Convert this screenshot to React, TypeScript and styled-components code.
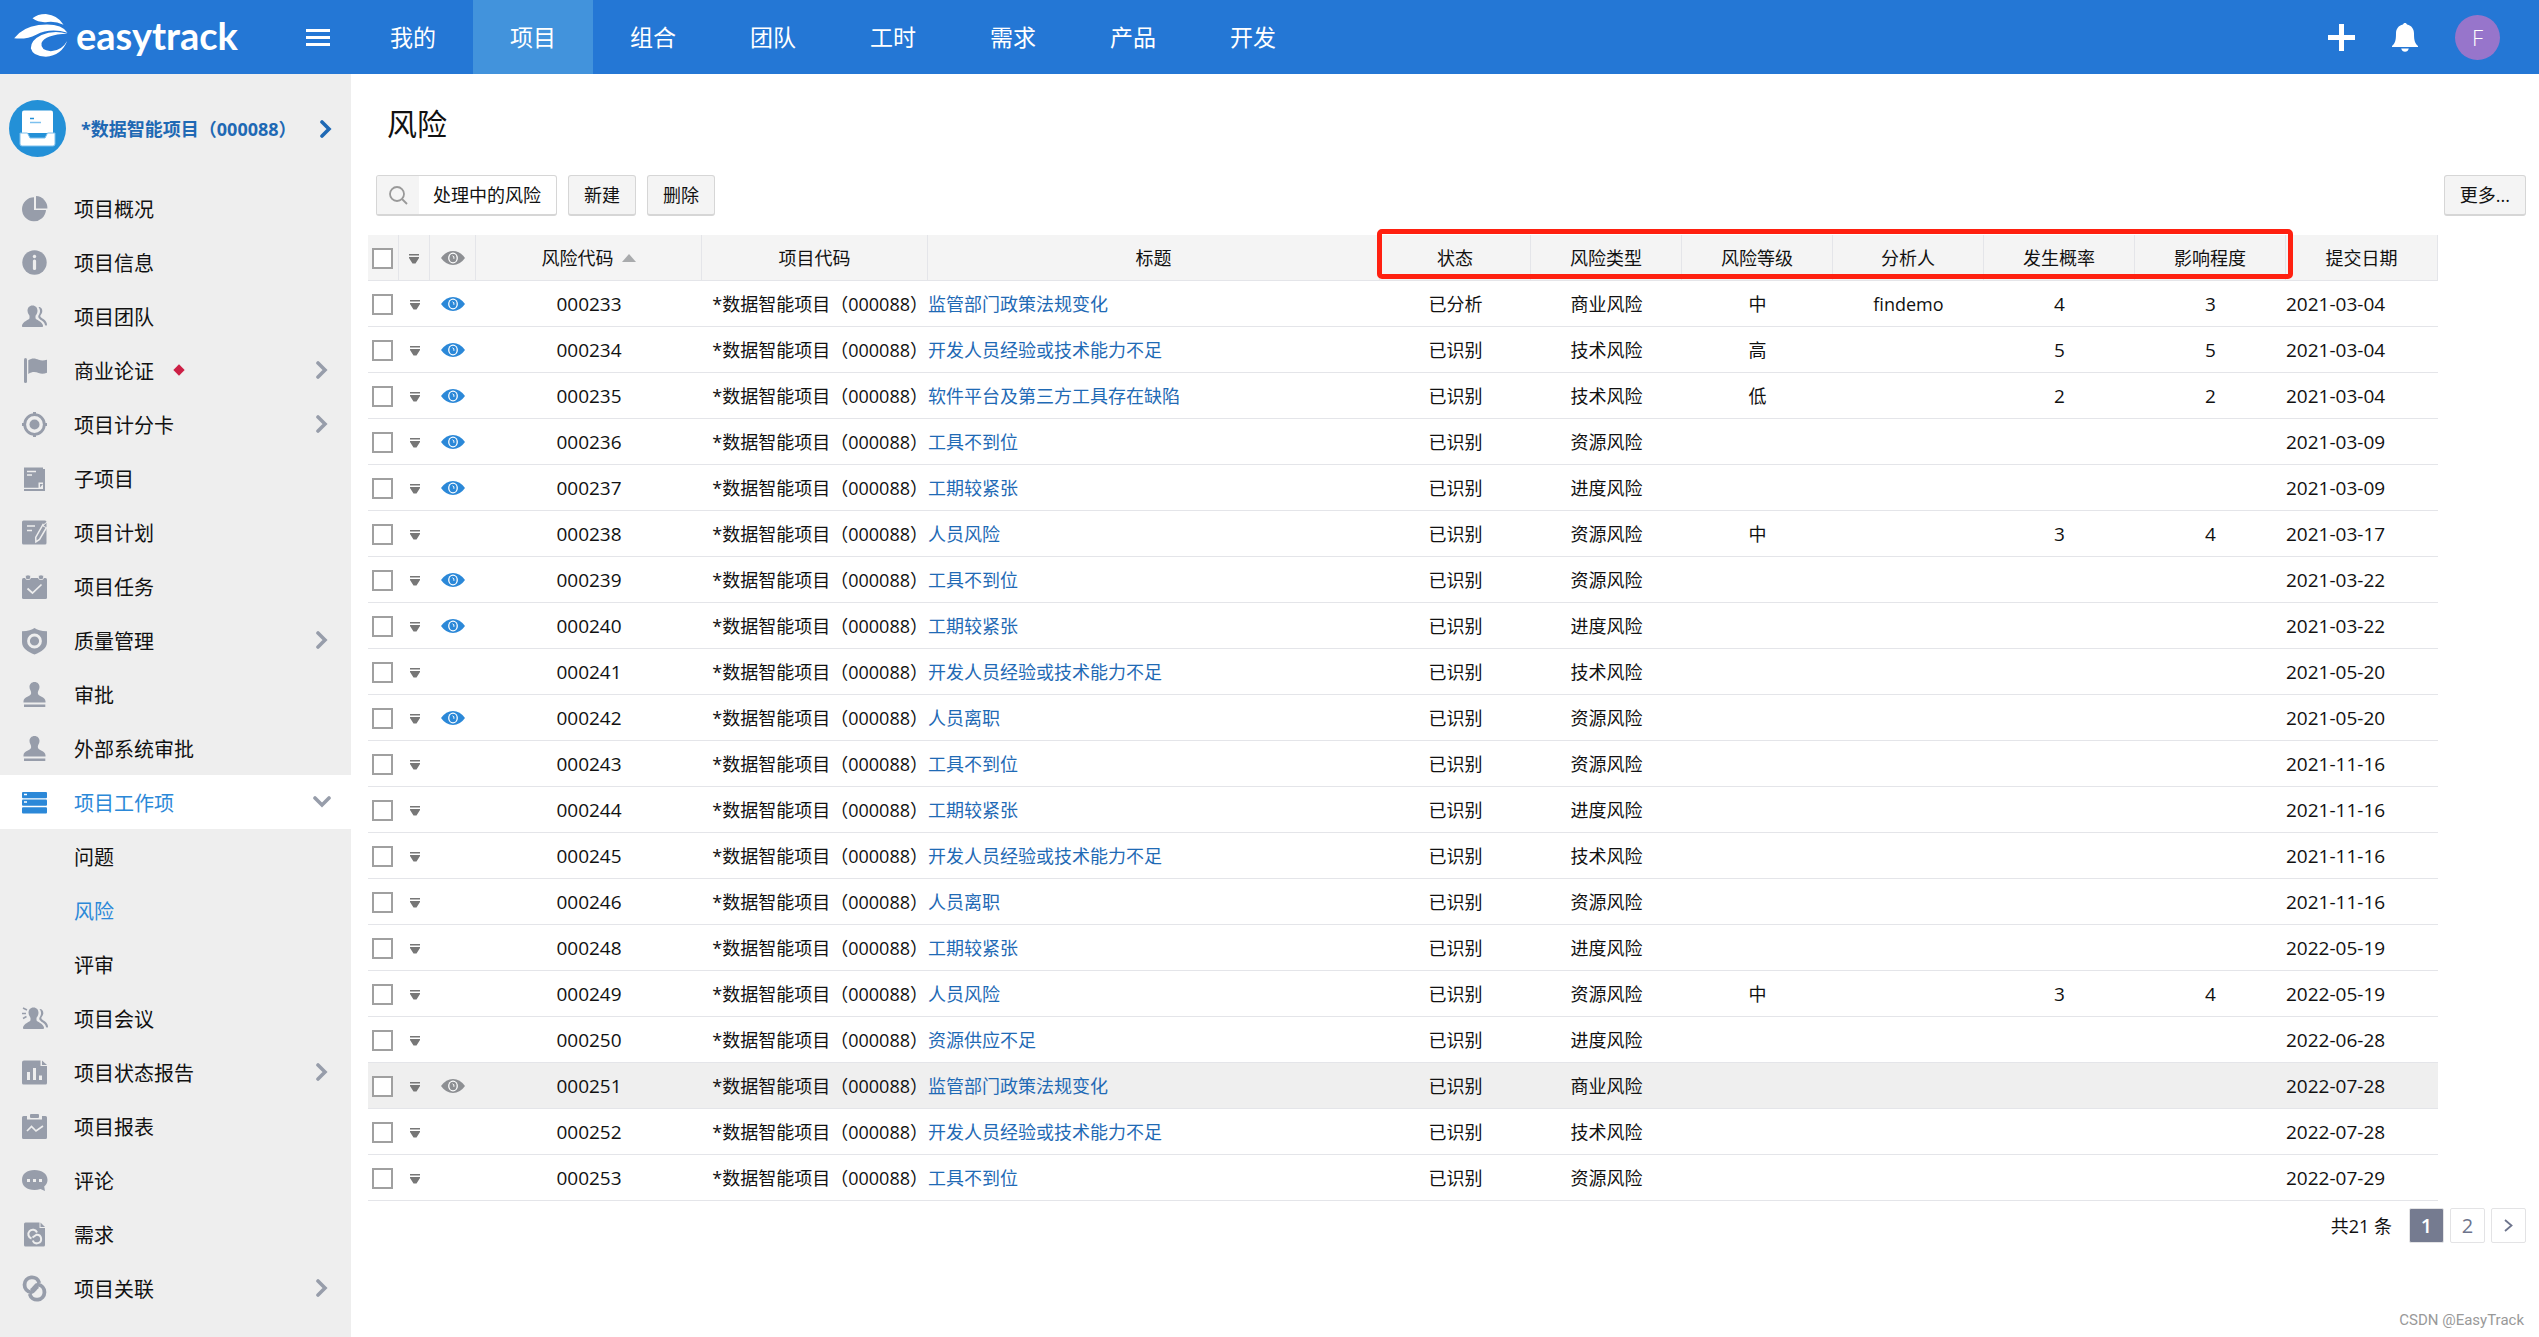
import React from "react";
import styled, { createGlobalStyle, css } from "styled-components";

const GlobalStyle = createGlobalStyle`
  * { box-sizing: border-box; }
  body {
    margin: 0;
    background: #fff;
    color: #111;
    font: 18px/24px "Open Sans", "Noto Sans CJK SC", sans-serif;
  }
  a { color: inherit; text-decoration: none; }
  button { font: inherit; color: inherit; cursor: pointer; }
  svg { display: block; flex: none; }
`;

/* ---------- header ---------- */

const Header = styled.header`
  display: flex;
  align-items: center;
  height: 74px;
  background: #2477d5;
  color: #fff;
`;

const Brand = styled.a`
  display: flex;
  align-items: center;
  gap: 8px;
  flex: none;
  width: 306px;
  padding: 0 0 4px 14px;
  font: 700 38px/50px Lato, "Open Sans", sans-serif;
`;

const PlainButton = styled.button`
  display: flex;
  align-items: center;
  justify-content: center;
  padding: 0;
  border: 0;
  background: none;
`;

const Nav = styled.nav`
  display: flex;
  align-self: stretch;
  margin-left: 23px;
`;

const NavItem = styled.a<{ $active?: boolean }>`
  display: flex;
  align-items: center;
  justify-content: center;
  width: 120px;
  font-size: 23px;
  background: ${(p) => (p.$active ? "#4293dc" : "transparent")};
`;

const HeaderTools = styled.div`
  display: flex;
  align-items: center;
  gap: 37px;
  margin-left: auto;
  padding-right: 39px;
`;

const Avatar = styled.button`
  width: 45px;
  height: 45px;
  padding: 0;
  border: 0;
  border-radius: 50%;
  background: #9775cb;
  && { color: #fff; font-size: 22px; font-weight: 300; }
`;

/* ---------- page frame ---------- */

const Body = styled.div`
  display: flex;
  min-height: calc(100vh - 74px);
`;

const Sidebar = styled.aside`
  flex: none;
  width: 351px;
  background: #eee;
`;

const Project = styled.a`
  display: flex;
  align-items: center;
  gap: 15px;
  height: 107px;
  padding: 2px 19px 0 9px;
  color: #1f69b4;
  font-weight: 700;
  white-space: nowrap;
`;

const Push = styled.span`
  margin-left: auto;
`;

const MenuItem = styled.a<{ $open?: boolean; $current?: boolean; $sub?: boolean }>`
  display: flex;
  align-items: center;
  height: 54px;
  padding: 0 ${(p) => (p.$open ? 20 : 23)}px 0 ${(p) => (p.$sub ? 74 : 22)}px;
  font-size: 20px;
  color: ${(p) => (p.$open || p.$current ? "#2b88d8" : "#111")};
  background: ${(p) => (p.$open ? "#fff" : "transparent")};
  > svg { margin-right: 27px; color: ${(p) => (p.$open ? "#2b88d8" : "#979daa")}; }
  ${Push} svg { color: #979daa; }
`;

const MenuLabel = styled.span`
  padding-top: 3px;
`;

const Diamond = styled.span`
  width: 8px;
  height: 8px;
  margin-left: 21px;
  background: #cc1f45;
  transform: rotate(45deg);
`;

const Main = styled.main`
  flex: 1;
  min-width: 0;
  padding: 30px 13px 60px 17px;
`;

const Title = styled.h1`
  margin: 0 0 31px;
  padding-left: 19px;
  font-size: 30px;
  line-height: 40px;
  font-weight: 400;
`;

/* ---------- toolbar ---------- */

const Toolbar = styled.div`
  display: flex;
  gap: 11px;
  margin-bottom: 19px;
  padding-left: 8px;
`;

const boxed = css`
  height: 41px;
  border: 1px solid #d6d6d6;
  border-bottom-width: 2px;
  border-radius: 3px;
`;

const Button = styled.button`
  ${boxed}
  padding: 0 15px;
  background: #f4f4f4;
`;

const Filter = styled.div`
  ${boxed}
  display: flex;
  overflow: hidden;
`;

const FilterSearch = styled(PlainButton)`
  width: 42px;
  background: #f4f4f4;
`;

const FilterName = styled(PlainButton)`
  padding: 0 15px 0 14px;
`;

/* ---------- table ---------- */

const TableArea = styled.div`
  position: relative;
  margin-right: 88px;
`;

const Highlight = styled.div`
  position: absolute;
  top: -6px;
  right: 145px;
  width: 916px;
  height: 50px;
  border: 5px solid #ff2010;
  border-radius: 5px;
  pointer-events: none;
`;

const Table = styled.table`
  width: 100%;
  table-layout: fixed;
  border-collapse: separate;
  border-spacing: 0;
`;

const Th = styled.th`
  height: 46px;
  padding: 0;
  border-bottom: 1px solid #e4e5e9;
  border-right: 1px solid #e4e5e9;
  background: #f4f4f4;
  font-weight: 400;
`;

const Row = styled.tr<{ $hover?: boolean }>`
  background: ${(p) => (p.$hover ? "#efefef" : "transparent")};
`;

const Td = styled.td<{ $align?: string; $figures?: boolean }>`
  height: 46px;
  padding: 0;
  border-bottom: 1px solid #e4e5e9;
  text-align: ${(p) => p.$align || "center"};
  font-size: ${(p) => (p.$figures ? 19 : 18)}px;
  white-space: nowrap;
  > a { color: #1f6ab5; }
`;

const Centered = styled.span`
  display: flex;
  align-items: center;
  justify-content: center;
  gap: 8px;
`;

const IconSlot = styled(PlainButton)`
  width: 100%;
  padding-top: 3px;
`;

const CheckBox = styled.input`
  appearance: none;
  display: block;
  width: 21px;
  height: 21px;
  margin: 1px 0 0 4px;
  border: 2px solid #a0a0a0;
  background: #fff;
`;

/* ---------- footer ---------- */

const Pager = styled.nav`
  display: flex;
  align-items: center;
  justify-content: flex-end;
  gap: 6px;
  margin-top: 7px;
`;

const Total = styled.span`
  margin-right: 11px;
`;

const PageButton = styled.button<{ $current?: boolean }>`
  display: flex;
  align-items: center;
  justify-content: center;
  width: 35px;
  height: 35px;
  padding: 0;
  border: 1px solid #e3e3e5;
  border-radius: 2px;
  background: ${(p) => (p.$current ? "#757b90" : "#fff")};
  && {
    color: ${(p) => (p.$current ? "#fff" : "#6d748c")};
    font-size: 20px;
    font-weight: ${(p) => (p.$current ? 600 : 400)};
  }
`;

const Watermark = styled.div`
  position: absolute;
  right: 15px;
  top: 1308px;
  color: #999;
  font: 15px/24px Roboto, "Liberation Sans", sans-serif;
`;

/* ---------- icons ---------- */

const Eye = ({ color }: { color: string }) => (
  <svg width="24" height="14" viewBox="0 0 24 14">
    <path d="M0 7Q5 0 12 0T24 7Q19 14 12 14T0 7Z" fill={color} />
    <ellipse cx="12" cy="7" rx="4.900" ry="5.400" fill="#fff" />
    <ellipse cx="12" cy="7" rx="3.600" ry="4.200" fill={color} />
    <path d="M11.500 4.800q2 .4 1.400 3" stroke="#fff" strokeWidth="1" fill="none" />
  </svg>
);

const Drop = () => (
  <svg width="10" height="10" viewBox="0 0 10 10" fill="#777">
    <path d="M0 0h10v1.6H0zM0 3h10v1L6.5 9.4h-3L0 4z" />
  </svg>
);

const Chevron = ({ down }: { down?: boolean }) => (
  <svg width={down ? 18 : 12} height={down ? 12 : 18} viewBox={down ? "0 0 18 12" : "0 0 12 18"} fill="none" stroke="currentColor" strokeWidth="3.600" strokeLinecap="round">
    <path d={down ? "M2 2l7 7 7-7" : "M2 2l7 7-7 7"} />
  </svg>
);

const bg = "#eee";
const line = { fill: "none", stroke: bg, strokeWidth: 1.4 };

const shapes: Record<string, React.ReactNode> = {
  pie: (
    <>
      <path d="M12 1.2A12 12 0 1 0 24 14H12z" />
      <path d="M14 0a12 12 0 0 1 11.400 12.500H14z" />
    </>
  ),
  info: (
    <>
      <circle cx="12.500" cy="12.500" r="12.200" />
      <circle cx="12.500" cy="6.500" r="1.700" fill={bg} />
      <rect x="10.900" y="9.500" width="3.200" height="10.500" rx="1.500" fill={bg} />
    </>
  ),
  team: (
    <>
      <path d="M10.500 1.500c3.200 0 5 2.300 5 5.300 0 2-.9 3.700-2 4.900v2.500c0 1.400 7 3.300 7.500 7.300.1 1-.4 1.500-1 1.500H1c-.7 0-1.100-.5-1-1.500.4-4 7.500-5.900 7.500-7.300v-2.500a7 7 0 0 1-2-4.900c0-3 1.800-5.300 5-5.300z" />
      <path d="M16.500 3c2.600-.3 4.300 2.300 3.700 5-.3 1.500-1 2.300-1.700 3.200-.4 1 0 1.800 1 2.600 2.500 1.800 5.500 3.200 5.500 7.200 0 .7-1.600.7-2 0-.5-3.700-4.500-4.500-6.300-7-.8-1.200-.4-2.400.4-3.500 1.300-2 1.400-5-.6-7.500z" />
    </>
  ),
  flag: (
    <>
      <rect x="2" y="0" width="3" height="25" rx="1.500" />
      <path d="M6.300 2.200c4.200-2.800 7.600-1.600 10.300-.4 2.900 1.200 5.400.9 8.400 0v13c-3 1-5.500 1.300-8.400.2-2.700-1-6.100-1.800-10.300.9z" />
    </>
  ),
  target: (
    <>
      <circle cx="12.500" cy="12.500" r="9.800" fill="none" stroke="currentColor" strokeWidth="2.800" />
      <circle cx="12.500" cy="12.500" r="5" />
      <path d="M11 0h3v3h-3zM11 22h3v3h-3zM0 11h3v3H0zM22 11h3v3h-3z" />
    </>
  ),
  notes: (
    <>
      <path d="M2 1.500h19v15h-4.500v5.300H2z" />
      <path d="M21 3h2v22H2v-2h19z" />
      <path d="M18 18h3l-3 3.500z" />
      <path d="M5 5.500h9M5 9h5" {...line} />
    </>
  ),
  plan: (
    <>
      <rect x="0" y=".5" width="24.500" height="24" rx="1.500" />
      <path d="M5 6h8M5 10.500h5" {...line} />
      <path d="M21 4.500l4 2.200-7.500 12.800-3.600 2.300-.2-4.400z" stroke={bg} strokeWidth="1.500" fill="#979daa" />
      <path d="M22 4.500l3-2.500v6l-4-2z" fill="#979daa" stroke={bg} strokeWidth="1" />
    </>
  ),
  task: (
    <>
      <rect x="0" y="4" width="25" height="21" rx="1.500" />
      <rect x="3.500" y="1" width="5" height="4.500" rx="1.500" stroke={bg} strokeWidth=".8" />
      <rect x="16.500" y="1" width="5" height="4.500" rx="1.500" stroke={bg} strokeWidth=".8" />
      <path d="M5.500 14.500l5 4.500 9-8.500" {...line} strokeWidth="1.700" />
    </>
  ),
  shield: (
    <>
      <path d="M12.500 0C15 2 19 3 25 3.200V14c0 6-5.500 10-12.500 12.500C5.500 24 0 20 0 14V3.200C6 3 10 2 12.500 0z" />
      <circle cx="12.500" cy="13" r="6" {...line} strokeWidth="2.800" />
    </>
  ),
  stamp: (
    <>
      <path d="M12.500 0c3 0 5 2.200 5 5 0 2.600-1.700 3.700-1.700 6 0 3.800 7.700 3.200 7.700 8.300v1.200h-22v-1.200c0-5.100 7.700-4.500 7.700-8.300 0-2.300-1.700-3.400-1.700-6 0-2.800 2-5 5-5z" />
      <path d="M2 22.500h21.300V25H2z" />
    </>
  ),
  stack: (
    <>
      <rect x="0" y="2" width="25" height="6.200" rx="1" />
      <rect x="0" y="9.600" width="25" height="6.200" rx="1" />
      <rect x="0" y="17.200" width="25" height="6.200" rx="1" />
      <path d="M2 4.500h3M2 12h3" stroke="#fff" strokeWidth="1.500" />
    </>
  ),
  report: (
    <>
      <path d="M2 .5h16.500V6H25v17a1.500 1.500 0 0 1-1.500 1.500h-22A1.500 1.500 0 0 1 0 23V2.500a2 2 0 0 1 2-2z" />
      <path d="M20 .5L25 5h-5z" />
      <path d="M5 12h3v8H5zM11 8h3v12h-3zM17 15.500h3V20h-3z" fill={bg} />
    </>
  ),
  clipboard: (
    <>
      <path d="M1.500 2H5v3.500h15V2h3.500A1.500 1.500 0 0 1 25 3.500v20a1.500 1.500 0 0 1-1.500 1.500h-22A1.500 1.500 0 0 1 0 23.500v-20A1.500 1.500 0 0 1 1.500 2z" />
      <rect x="8" y="0" width="9" height="4" rx="1" />
      <path d="M5 17l4.500-4.500 4.500 4.500 7-5" {...line} strokeWidth="1.700" />
    </>
  ),
  comment: (
    <>
      <path d="M12.500 2C5 2 0 5.800 0 12s5 10 12.500 10c2 0 4-.3 6-.9L23 23l-.8-4.500C24 17 25.500 15 25.500 12 25.500 5.800 20 2 12.500 2z" />
      <path d="M5 11h3v3H5zM11 11h3v3h-3zM17 11h3v3h-3z" fill={bg} />
    </>
  ),
  demand: (
    <>
      <path d="M3.500.5h14V6H23v17a1.500 1.500 0 0 1-1.500 1.500h-18A1.500 1.500 0 0 1 2 23V2A1.500 1.500 0 0 1 3.500.5z" />
      <path d="M18.500.5L23 5h-4.500z" />
      <path d="M15 10.500a4.500 4.500 0 1 0-5.500 6M10.500 15.500l4-2.800a4.300 4.300 0 1 1-3.700 5.800" {...line} strokeWidth="2" />
    </>
  ),
  link: (
    <g fill="none" stroke="currentColor" strokeWidth="3.800">
      <path d="M17.300 7A7.500 7.500 0 1 0 9 16.300c3 0 3.500-4 7-6" />
      <path d="M7.700 18A7.500 7.500 0 1 0 16 8.700c-3 0-3.500 4-7 6" />
    </g>
  ),
};
shapes.meeting = (
  <>
    <g transform="translate(1 0)">{shapes.team}</g>
    <path d="M1 2l4 2M0 7.500h4M1 12.500l3.500-2" stroke="currentColor" strokeWidth="1.500" />
  </>
);

const MenuIcon = ({ name }: { name: string }) => (
  <svg width="25" height="25" viewBox="0 0 25 25" overflow="visible" fill="currentColor">
    {shapes[name]}
  </svg>
);

const Logo = () => (
  <svg width="54" height="43" viewBox="42 45 161 129" fill="#fff">
    <path d="M97 58Q112 45 137 45Q174 49 190 77Q166 66 142 69Q116 72 97 58Z" />
    <path d="M42 118Q66 85 115 78Q182 70 202 101Q150 86 108 107Q80 122 42 118Z" />
    <path d="M202 104Q160 92 124 108Q91 124 92 148Q98 173 137 173Q184 170 201 126Q185 155 152 157Q120 153 124 132Q134 106 202 104Z" />
  </svg>
);

const ProjectBadge = () => (
  <svg width="57" height="57" viewBox="0 0 57 57">
    <circle cx="28.500" cy="28.500" r="28.500" fill="#2390d7" />
    <path d="M15 10.500h27a2 2 0 0 1 2 2V33H13V12.500a2 2 0 0 1 2-2z" fill="#fff" />
    <path d="M11 33h7.500l2.500 5h15l2.500-5H46v11a2 2 0 0 1-2 2H13a2 2 0 0 1-2-2z" fill="#fff" stroke="#7cc0ee" strokeWidth="1" />
    <path d="M21 18.500h4" stroke="#2390d7" strokeWidth="1.500" />
    <path d="M21 22.500h11" stroke="#7cc0ee" strokeWidth="1.500" />
  </svg>
);

/* ---------- data ---------- */

const nav = ["我的", "项目", "组合", "团队", "工时", "需求", "产品", "开发"];

type Item = { label: string; icon?: string; more?: boolean; open?: boolean; current?: boolean; dot?: boolean };
const menu: Item[] = [
  { label: "项目概况", icon: "pie" },
  { label: "项目信息", icon: "info" },
  { label: "项目团队", icon: "team" },
  { label: "商业论证", icon: "flag", more: true, dot: true },
  { label: "项目计分卡", icon: "target", more: true },
  { label: "子项目", icon: "notes" },
  { label: "项目计划", icon: "plan" },
  { label: "项目任务", icon: "task" },
  { label: "质量管理", icon: "shield", more: true },
  { label: "审批", icon: "stamp" },
  { label: "外部系统审批", icon: "stamp" },
  { label: "项目工作项", icon: "stack", more: true, open: true },
  { label: "问题" },
  { label: "风险", current: true },
  { label: "评审" },
  { label: "项目会议", icon: "meeting" },
  { label: "项目状态报告", icon: "report", more: true },
  { label: "项目报表", icon: "clipboard" },
  { label: "评论", icon: "comment" },
  { label: "需求", icon: "demand" },
  { label: "项目关联", icon: "link", more: true },
];

const project = "*数据智能项目（000088）";

type Risk = [code: string, watched: boolean, title: string, status: string, type: string, level: string, analyst: string, chance: string, impact: string, date: string];
const risks: Risk[] = [
  ["000233", true, "监管部门政策法规变化", "已分析", "商业风险", "中", "findemo", "4", "3", "2021-03-04"],
  ["000234", true, "开发人员经验或技术能力不足", "已识别", "技术风险", "高", "", "5", "5", "2021-03-04"],
  ["000235", true, "软件平台及第三方工具存在缺陷", "已识别", "技术风险", "低", "", "2", "2", "2021-03-04"],
  ["000236", true, "工具不到位", "已识别", "资源风险", "", "", "", "", "2021-03-09"],
  ["000237", true, "工期较紧张", "已识别", "进度风险", "", "", "", "", "2021-03-09"],
  ["000238", false, "人员风险", "已识别", "资源风险", "中", "", "3", "4", "2021-03-17"],
  ["000239", true, "工具不到位", "已识别", "资源风险", "", "", "", "", "2021-03-22"],
  ["000240", true, "工期较紧张", "已识别", "进度风险", "", "", "", "", "2021-03-22"],
  ["000241", false, "开发人员经验或技术能力不足", "已识别", "技术风险", "", "", "", "", "2021-05-20"],
  ["000242", true, "人员离职", "已识别", "资源风险", "", "", "", "", "2021-05-20"],
  ["000243", false, "工具不到位", "已识别", "资源风险", "", "", "", "", "2021-11-16"],
  ["000244", false, "工期较紧张", "已识别", "进度风险", "", "", "", "", "2021-11-16"],
  ["000245", false, "开发人员经验或技术能力不足", "已识别", "技术风险", "", "", "", "", "2021-11-16"],
  ["000246", false, "人员离职", "已识别", "资源风险", "", "", "", "", "2021-11-16"],
  ["000248", false, "工期较紧张", "已识别", "进度风险", "", "", "", "", "2022-05-19"],
  ["000249", false, "人员风险", "已识别", "资源风险", "中", "", "3", "4", "2022-05-19"],
  ["000250", false, "资源供应不足", "已识别", "进度风险", "", "", "", "", "2022-06-28"],
  ["000251", false, "监管部门政策法规变化", "已识别", "商业风险", "", "", "", "", "2022-07-28"],
  ["000252", false, "开发人员经验或技术能力不足", "已识别", "技术风险", "", "", "", "", "2022-07-28"],
  ["000253", false, "工具不到位", "已识别", "资源风险", "", "", "", "", "2022-07-29"],
];
const hovered = "000251";

const heads = ["状态", "风险类型", "风险等级", "分析人", "发生概率", "影响程度", "提交日期"];
const columns = [31, 31, 46, 226, 226, undefined, 151, 151, 151, 151, 151, 151, 152];

/* ---------- page ---------- */

export default function App() {
  return (
    <>
      <GlobalStyle />
      <Header>
        <Brand href="#">
          <Logo />
          easytrack
        </Brand>
        <PlainButton aria-label="菜单">
          <svg width="24" height="17" viewBox="0 0 24 17" fill="#fff">
            <path d="M0 0h24v3H0zM0 7h24v3H0zM0 14h24v3H0z" />
          </svg>
        </PlainButton>
        <Nav>
          {nav.map((n) => (
            <NavItem key={n} href="#" $active={n === "项目"}>{n}</NavItem>
          ))}
        </Nav>
        <HeaderTools>
          <PlainButton aria-label="添加">
            <svg width="27" height="27" viewBox="0 0 27 27" fill="#fff">
              <path d="M11 0h5v11h11v5H16v11h-5V16H0v-5h11z" />
            </svg>
          </PlainButton>
          <PlainButton aria-label="通知">
            <svg width="26" height="29" viewBox="0 0 26 29" fill="#fff">
              <path d="M13 0c1 0 1.800.7 2 1.600 4.600 1 7 4.400 7 9 0 7.400 1 10 4 12.400v1H0v-1c3-2.400 4-5 4-12.400 0-4.600 2.400-8 7-9C11.200.7 12 0 13 0z" />
              <path d="M9.200 25.500h7.600c-.4 2-2 3.300-3.800 3.300s-3.400-1.300-3.800-3.300z" />
            </svg>
          </PlainButton>
          <Avatar>F</Avatar>
        </HeaderTools>
      </Header>
      <Body>
        <Sidebar>
          <Project href="#">
            <ProjectBadge />
            {project}
            <Push><Chevron /></Push>
          </Project>
          {menu.map((m) => (
            <MenuItem key={m.label} href="#" $open={m.open} $current={m.current} $sub={!m.icon}>
              {m.icon && <MenuIcon name={m.icon} />}
              <MenuLabel>{m.label}</MenuLabel>
              {m.dot && <Diamond />}
              {m.more && <Push><Chevron down={m.open} /></Push>}
            </MenuItem>
          ))}
        </Sidebar>
        <Main>
          <Title>风险</Title>
          <Toolbar>
            <Filter>
              <FilterSearch aria-label="搜索">
                <svg width="19" height="19" viewBox="0 0 19 19" fill="none" stroke="#999" strokeWidth="1.800">
                  <circle cx="8" cy="8" r="7" />
                  <path d="M13 13l5 5" />
                </svg>
              </FilterSearch>
              <FilterName>处理中的风险</FilterName>
            </Filter>
            <Button>新建</Button>
            <Button>删除</Button>
            <Push><Button>更多...</Button></Push>
          </Toolbar>
          <TableArea>
            <Table>
              <colgroup>
                {columns.map((w, i) => <col key={i} width={w} />)}
              </colgroup>
              <thead>
                <tr>
                  <Th><CheckBox type="checkbox" aria-label="全选" /></Th>
                  <Th><IconSlot aria-label="操作"><Drop /></IconSlot></Th>
                  <Th><Centered><Eye color="#8d8f93" /></Centered></Th>
                  <Th>
                    <Centered>
                      风险代码
                      <svg width="14" height="8" viewBox="0 0 14 8" fill="#a9abad"><path d="M7 0l7 8H0z" /></svg>
                    </Centered>
                  </Th>
                  <Th>项目代码</Th>
                  <Th>标题</Th>
                  {heads.map((h) => <Th key={h}>{h}</Th>)}
                </tr>
              </thead>
              <tbody>
                {risks.map(([code, watched, title, status, type, level, analyst, chance, impact, date]) => (
                  <Row key={code} $hover={code === hovered}>
                    <Td><CheckBox type="checkbox" aria-label={code} /></Td>
                    <Td><IconSlot aria-label="操作"><Drop /></IconSlot></Td>
                    <Td>
                      {(watched || code === hovered) && (
                        <Centered><Eye color={watched ? "#2b88d8" : "#8d8f93"} /></Centered>
                      )}
                    </Td>
                    <Td $figures>{code}</Td>
                    <Td $align="right">{project}</Td>
                    <Td $align="left"><a href="#">{title}</a></Td>
                    <Td>{status}</Td>
                    <Td>{type}</Td>
                    <Td>{level}</Td>
                    <Td>{analyst}</Td>
                    <Td $figures>{chance}</Td>
                    <Td $figures>{impact}</Td>
                    <Td $figures $align="left">{date}</Td>
                  </Row>
                ))}
              </tbody>
            </Table>
            <Highlight />
          </TableArea>
          <Pager>
            <Total>共21 条</Total>
            <PageButton $current>1</PageButton>
            <PageButton>2</PageButton>
            <PageButton aria-label="下一页">
              <svg width="9" height="13" viewBox="0 0 9 13" fill="none" stroke="#6d748c" strokeWidth="1.800">
                <path d="M1 1l6.500 5.500L1 12" />
              </svg>
            </PageButton>
          </Pager>
        </Main>
      </Body>
      <Watermark>CSDN @EasyTrack</Watermark>
    </>
  );
}
